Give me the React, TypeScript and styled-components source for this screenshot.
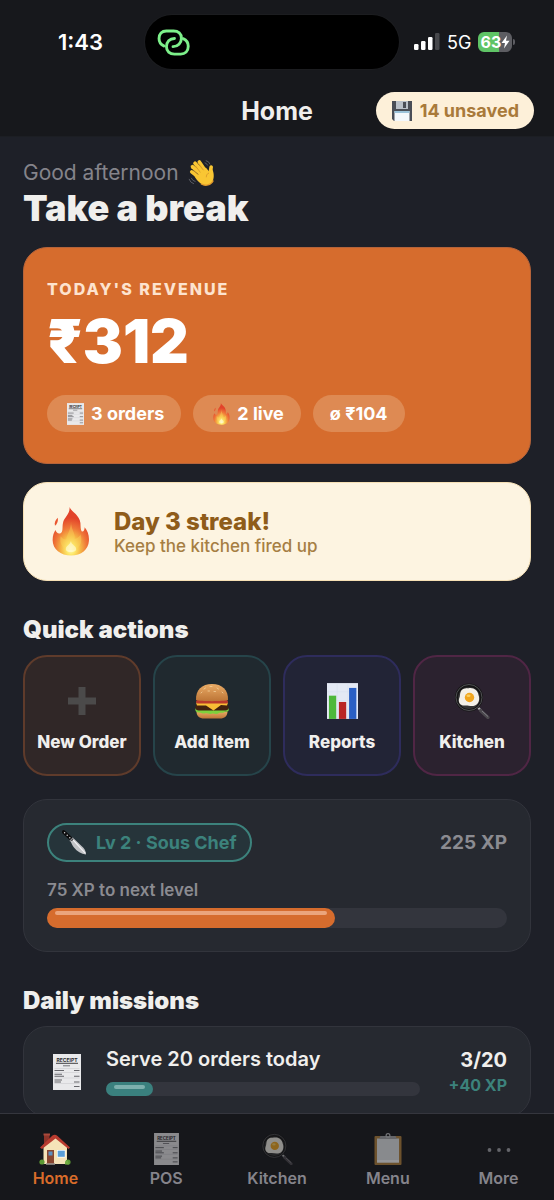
import React from 'react';
import styled, { createGlobalStyle } from 'styled-components';

const GlobalStyle = createGlobalStyle`
  *, *::before, *::after { box-sizing: border-box; }
  body {
    margin: 0;
    background: #1e2028;
    color: #f0efed;
    font-family: Inter, "Liberation Sans", sans-serif;
  }
  h1, h2, p, ul { margin: 0; padding: 0; }
  button { font-family: inherit; margin: 0; cursor: pointer; }
`;

/* ---------- drawings ---------- */

type IconProps = { size: number };

const LinkRings = () => (
  <svg width="33" height="27" viewBox="0 0 34 28" fill="none" stroke="#7df08a" strokeWidth="3" strokeLinecap="round" aria-hidden="true">
    <path d="M7 17.500C3.800 16 2 13 2 9.800C2 5 5 2 9.500 2H17C22 2 25.200 5 25.200 9.500C25.200 14.500 21.500 18.300 16.500 18.300" />
    <path d="M27 10C30.500 11.500 32.300 14.500 32.300 18C32.300 23 29 26 24.500 26H18C13 26 9.700 23 9.700 18.500C9.700 13.500 13 9.800 18 9.800" />
  </svg>
);

const SignalBars = () => (
  <svg width="26" height="18" viewBox="0 0 26 18" aria-hidden="true">
    <rect x="0" y="11" width="4.500" height="6" rx="1.200" fill="#fff" />
    <rect x="7" y="8" width="4.500" height="9" rx="1.200" fill="#fff" />
    <rect x="14" y="4" width="4.500" height="13" rx="1.200" fill="#fff" />
    <rect x="21" y="0" width="4.500" height="17" rx="1.200" fill="#47484c" />
  </svg>
);

const Bolt = () => (
  <svg width="9" height="14" viewBox="0 0 9 14" aria-hidden="true">
    <path d="M6 0.500L0.500 8H4L3 13.500L8.500 5.800H5Z" fill="#fff" />
  </svg>
);

const Floppy = ({ size }: IconProps) => (
  <svg width={size} height={size} viewBox="0 0 22 22" aria-hidden="true">
    <path d="M1 1H21V21H3L1 19Z" fill="#4a4e56" />
    <rect x="5" y="1" width="12" height="8" fill="#b9c0c8" />
    <rect x="12" y="2" width="3" height="6" fill="#4a4e56" />
    <rect x="3.500" y="11" width="15" height="10" fill="#f3f8fc" />
    <rect x="3.500" y="11" width="15" height="2" fill="#9bc3da" />
  </svg>
);

const Wave = ({ size }: IconProps) => (
  <svg width={size} height={size} viewBox="0 0 26 26" aria-hidden="true">
    <g stroke="#f9c633" strokeWidth="3.400" strokeLinecap="round" fill="none">
      <path d="M12 14L4.200 7.200" />
      <path d="M13.500 12L6.500 4" />
      <path d="M16 11L10.500 2.800" />
      <path d="M10 17L3.500 12" />
      <path d="M20.500 14L21.500 7.500" />
    </g>
    <path d="M8 16L16.500 8L20 12L22.500 9.500C24 12 24.500 17 23 20.500C21 25 15 25.500 11.500 22.500C9.500 21 7 18 6 16Z" fill="#f9c633" />
    <path d="M9 14.500L5 10.500M11.500 12.500L7 6.500M14.500 10.500L10 4.500M19.500 13C17.500 13.500 17 15.500 17 17" stroke="#d4912a" strokeWidth="0.700" fill="none" />
    <path d="M12 23C16 25.500 21.500 24.500 23.500 20" stroke="#e39a2c" strokeWidth="1.200" fill="none" />
    <path d="M1 18.500Q2 22 5.500 23M3 17.500Q4 20.300 7 21M16.500 1.500Q19.500 2 20.500 5M15.500 3.500Q17.500 4 18.300 6" stroke="#5a5c63" strokeWidth="0.900" fill="none" />
  </svg>
);

const Flame = ({ size }: IconProps) => (
  <svg width={Math.round(size * 0.78)} height={size} viewBox="0 0 40 52" aria-hidden="true">
    <defs>
      <radialGradient id="flameFill" cx="0.5" cy="0.86" r="0.78">
        <stop offset="0" stopColor="#fffbd0" />
        <stop offset="0.15" stopColor="#fdea6c" />
        <stop offset="0.34" stopColor="#f6b746" />
        <stop offset="0.56" stopColor="#ef7738" />
        <stop offset="0.82" stopColor="#e2432a" />
      </radialGradient>
    </defs>
    <path d="M18.500 0C20 5 29 8 30 17C30.300 21 30 24 31.500 26C33.500 26.500 34.500 24 34.500 21.500C37.500 25 39.500 30 39 36C38.500 45 31 51.500 20 51.500C9 51.500 0.500 45 0.500 35C0.500 30 2 27 3.500 24.500C4.500 27 6 28.500 8.500 28C12 27 10.500 21 11.500 17C12.500 11 19 8 18.500 0Z" fill="url(#flameFill)" />
    <path d="M6 11.500C3.500 14 2 16.500 3 20C5.500 18 6.500 15 6 11.500Z" fill="#e9552f" />
    <path d="M20 15C20 24 25 28 24 34C28 33 29 31 30 29C33 37 29 46 20 46C12 46 7 39 9 31C12 34 13 35 15 34C16 28 20 24 20 15Z" fill="#fbd85c" opacity="0.400" />
    <path d="M20 36C20 40 26 41 25.500 45C25 48.500 15 49 14.500 45C14 41.500 19 40 20 36Z" fill="#fffde0" opacity="0.600" />
  </svg>
);

const Receipt = ({ size }: IconProps) => (
  <svg width={Math.round(size * 0.78)} height={size} viewBox="0 0 28 36" aria-hidden="true">
    <rect width="28" height="36" fill="#e9e9eb" />
    <text x="14" y="7.500" textAnchor="middle" fontFamily="Inter, sans-serif" fontSize="5" fontWeight="700" fill="#2b2b2e">RECEIPT</text>
    <path d="M3 9.300H25" stroke="#2b2b2e" strokeWidth="0.900" />
    <path d="M10 11.800H17" stroke="#66666b" strokeWidth="0.900" />
    <path d="M1.500 14.500H26.500M1.500 18.500H26.500M1.500 24H26.500M1.500 29.500H26.500" stroke="#c4c4c8" strokeWidth="0.500" />
    <path d="M1.500 16.500H11M1.500 20.300H9M1.500 22.300H11M1.500 26H9M1.500 28H8M21 16.500H26.500M21 22.300H26.500M21 28H26.500M21 32.500H26.500" stroke="#66666b" strokeWidth="1.100" />
  </svg>
);

const Plus = ({ size }: IconProps) => (
  <svg width={size} height={size} viewBox="0 0 36 36" aria-hidden="true">
    <path d="M14.500 4H21.500V14.500H32V21.500H21.500V32H14.500V21.500H4V14.500H14.500Z" fill="#4b4a4a" />
  </svg>
);

const Burger = ({ size }: IconProps) => (
  <svg width={size} height={size} viewBox="0 0 36 36" aria-hidden="true">
    <defs>
      <linearGradient id="bun" x1="0" y1="0" x2="0" y2="1">
        <stop offset="0" stopColor="#e9ab66" />
        <stop offset="1" stopColor="#bd7536" />
      </linearGradient>
    </defs>
    <path d="M2.500 28.500H33.500C33.500 33 30.500 35.500 26 35.500H10C5.500 35.500 2.500 33 2.500 28.500Z" fill="url(#bun)" />
    <path d="M1.500 25.500C3 24 33 24 34.500 25.500C35.500 28 33.500 29.500 31 28.500C29 31 27 29 25 30C22.500 32 20 30 18 30.500C15.500 32 13 29.500 10.500 30.500C8 31 6.500 29 4.500 29.500C2 29.500 0.800 27.500 1.500 25.500Z" fill="#7ed03c" />
    <rect x="1.500" y="21" width="33" height="6.500" rx="3.200" fill="#42220f" />
    <path d="M2 19.500H34L33 22.500L27 22L19.500 27.500L12 22.500L3 22.500Z" fill="#f8bd35" />
    <rect x="2" y="17" width="32" height="3.500" rx="1.700" fill="#ba3a2c" />
    <path d="M2 17C1.500 7 8 1 18 1C28 1 34.500 7 34 17C30 18.500 6 18.500 2 17Z" fill="url(#bun)" />
    <path d="M10 6L11.500 5M16 3.500H18M23 5L24.500 6M14 8H15.500M20 8.500H21.500M28 9L29 10M7 10L8 9" stroke="#f3d09a" strokeWidth="0.800" strokeLinecap="round" />
  </svg>
);

const Chart = ({ size }: IconProps) => (
  <svg width={Math.round(size * 0.86)} height={size} viewBox="0 0 32 37" aria-hidden="true">
    <rect width="32" height="37" fill="#e4e9f4" />
    <path d="M0 9H32M0 18H32M0 27H32M10.500 0V37M21.500 0V37" stroke="#d6deee" strokeWidth="0.500" />
    <rect x="2" y="13" width="7.500" height="24" fill="#4eb83a" />
    <rect x="12.300" y="19.500" width="7.500" height="17.500" fill="#b92525" />
    <rect x="22.800" y="5" width="7.500" height="32" fill="#2a5fc4" />
  </svg>
);

const Pan = ({ size }: IconProps) => (
  <svg width={size} height={size} viewBox="0 0 36 36" aria-hidden="true">
    <path d="M23.500 24L27 27.500" stroke="#b8b8bb" strokeWidth="2.200" />
    <path d="M26.500 27.500L34 34.500" stroke="#4b484d" strokeWidth="3.200" strokeLinecap="round" />
    <path d="M28 28L34 33.500" stroke="#85838a" strokeWidth="0.900" />
    <circle cx="15" cy="14.500" r="14" fill="#151515" />
    <circle cx="15" cy="14.500" r="13" fill="none" stroke="#56565a" strokeWidth="0.900" />
    <circle cx="15" cy="15" r="11" fill="#333334" />
    <path d="M7 8C9 4.500 13 5.500 15.500 5C20 4.500 24 7.500 24.500 12C26 16 25 21 21 22.500C17 24 14 22 11 22.500C7 23 4 20 5 16C6.500 13 5.500 10.500 7 8Z" fill="#f3f0e8" />
    <circle cx="15.500" cy="14.500" r="4.700" fill="#f0a51f" />
    <ellipse cx="14.500" cy="12.800" rx="2" ry="1.300" fill="#f9cf63" />
  </svg>
);

const Knife = ({ size }: IconProps) => (
  <svg width={size} height={size} viewBox="0 0 24 24" aria-hidden="true">
    <path d="M8 10.500L11 8L20.500 17C22.500 19 23 21.500 23 23.500C18.500 23 14.500 20.500 11.500 16.800C10 14.800 9 12.500 8 10.500Z" fill="#c2c4c7" />
    <path d="M10.500 9.500L22.500 22.500" stroke="#f5f5f7" strokeWidth="1" />
    <path d="M1.500 1.800L9 8.800" stroke="#0c0c0d" strokeWidth="3.400" strokeLinecap="round" />
    <path d="M7.500 10.800L10.800 7.500" stroke="#8d8f94" strokeWidth="1.300" />
    <g fill="#d8d8da"><circle cx="2.500" cy="2.600" r="0.700" /><circle cx="5" cy="5" r="0.700" /><circle cx="7.500" cy="7.400" r="0.700" /></g>
  </svg>
);

const House = ({ size }: IconProps) => (
  <svg width={size} height={size} viewBox="0 0 32 32" aria-hidden="true">
    <rect x="5" y="1" width="5.500" height="10" fill="#8d3329" />
    <rect x="4.500" y="0.500" width="6.500" height="2" fill="#a94a3c" />
    <path d="M4.500 14L17 3L28 14V31H4.500Z" fill="#f5e3b8" />
    <path d="M1 14.500L13.500 2.500Q16 1 18.500 3L31 14.500L29.500 16L16.500 5.500L3 16Z" fill="#b93c30" />
    <rect x="8" y="17" width="7" height="14" fill="#87452f" />
    <rect x="9.500" y="18.500" width="4" height="4" fill="#5b8fc0" />
    <rect x="18" y="17" width="8.500" height="7.500" fill="#fff" />
    <rect x="18.700" y="17.700" width="7.100" height="6.100" fill="#5b9fd8" />
    <path d="M7 31H16" stroke="#9d9a94" strokeWidth="1.500" />
    <circle cx="3" cy="29" r="2.600" fill="#5c9a35" />
    <circle cx="29" cy="29" r="2.600" fill="#5c9a35" />
    <path d="M26 31.500C25.500 29 27 27 29 28L30 31.500Z" fill="#71ad42" />
  </svg>
);

const Clipboard = ({ size }: IconProps) => (
  <svg width={Math.round(size * 0.88)} height={size} viewBox="0 0 28 32" aria-hidden="true">
    <rect x="0.500" y="3" width="27" height="29" rx="1" fill="#b5833d" />
    <rect x="3" y="5.500" width="22" height="24" fill="#e6e8ea" />
    <rect x="3" y="27" width="22" height="2.500" fill="#fff" />
    <path d="M5 6L6.500 3H21.500L23 6Z" fill="#a6a8ac" />
    <circle cx="14" cy="2.500" r="1.900" fill="none" stroke="#c0c2c5" strokeWidth="1.200" />
  </svg>
);

const Dots = () => (
  <svg width="24" height="32" viewBox="0 0 24 32" aria-hidden="true">
    <g fill="#a5a5ab"><circle cx="2.500" cy="17" r="1.900" /><circle cx="12" cy="17" r="1.900" /><circle cx="21.500" cy="17" r="1.900" /></g>
  </svg>
);

/* ---------- shell ---------- */

const Screen = styled.div`
  height: 100vh;
  display: flex;
  flex-direction: column;
`;

const TopBar = styled.header`
  flex: none;
  background: #17181c;
  border-bottom: 1px solid #1c1e23;
`;

const StatusBar = styled.div`
  display: grid;
  grid-template-columns: 1fr 254px 1fr;
  align-items: center;
  padding: 15px 10px 0 0;
`;

const Clock = styled.time`
  padding-left: 16px;
  text-align: center;
  font-size: 22px;
  font-weight: 600;
  color: #fff;
`;

const Island = styled.div`
  height: 54px;
  padding-left: 12px;
  display: flex;
  align-items: center;
  border-radius: 27px;
  background: #000;
  box-shadow: 0 0 0 1px #1c1d20;
`;

const Signals = styled.div`
  display: flex;
  align-items: center;
  gap: 7px;
  padding-left: 15px;
  color: #fff;
  font-size: 18px;
  font-weight: 400;
`;

const Battery = styled.div`
  position: relative;
  display: flex;
  align-items: center;
  justify-content: center;
  width: 34px;
  height: 20px;
  border-radius: 6px;
  background: linear-gradient(90deg, #5fc466 63%, #5d5d62 63%);
  font-size: 16px;
  font-weight: 700;

  &::after {
    content: '';
    position: absolute;
    left: 35px;
    top: 7px;
    width: 2px;
    height: 6px;
    border-radius: 0 2px 2px 0;
    background: #5d5d62;
  }
`;

const TitleRow = styled.div`
  display: grid;
  grid-template-columns: 1fr auto 1fr;
  align-items: center;
  padding: 23px 20px 7px;
`;

const ScreenTitle = styled.h1`
  grid-column: 2;
  font-size: 25px;
  line-height: 30px;
  font-weight: 700;
`;

const UnsavedButton = styled.button`
  justify-self: end;
  display: flex;
  align-items: center;
  gap: 7px;
  height: 37px;
  padding: 0 15px;
  border: 0;
  border-radius: 19px;
  background: #fdf0d9;
  color: #a97a3a;
  font-size: 18px;
  font-weight: 700;
  white-space: nowrap;
`;

const Content = styled.main`
  flex: 1;
  min-height: 0;
  overflow-y: auto;
  scrollbar-width: none;
  padding: 23px 23px 24px;
`;

/* ---------- greeting ---------- */

const Greeting = styled.p`
  display: flex;
  align-items: center;
  gap: 9px;
  height: 26px;
  font-size: 21px;
  line-height: 26px;
  color: #85848b;
`;

const Headline = styled.h2`
  font-size: 36px;
  line-height: 44px;
  font-weight: 900;
`;

/* ---------- cards ---------- */

const RevenueCard = styled.section`
  margin-top: 17px;
  padding: 30px 23px 31px;
  border: 1px solid #b5633a;
  border-radius: 24px;
  background: #d66c2d;
`;

const RevenueLabel = styled.h2`
  font-size: 16px;
  line-height: 22px;
  font-weight: 800;
  letter-spacing: 2px;
  text-transform: uppercase;
  color: #fde3cf;
`;

const RevenueAmount = styled.p`
  margin-top: 11px;
  font-size: 60px;
  line-height: 60px;
  font-weight: 900;
  color: #fff;
`;

const Chips = styled.ul`
  display: flex;
  gap: 12px;
  margin-top: 24px;
  list-style: none;
`;

const Chip = styled.li`
  display: flex;
  align-items: center;
  gap: 5px;
  height: 37px;
  padding: 0 17px;
  border-radius: 19px;
  background: #de8a53;
  color: #fff;
  font-size: 18px;
  font-weight: 700;
  white-space: nowrap;
`;

const StreakCard = styled.section`
  display: flex;
  align-items: center;
  gap: 20px;
  margin-top: 18px;
  padding: 24px 23px;
  border: 1px solid #f6e0b5;
  border-radius: 24px;
  background: #fdf4e1;
`;

const IconSlot = styled.span<{ $width: number }>`
  flex: none;
  width: ${(p) => p.$width}px;
  display: flex;
  justify-content: center;
`;

const StreakTitle = styled.h2`
  font-size: 24px;
  line-height: 29px;
  font-weight: 800;
  color: #8f5c1a;
`;

const StreakNote = styled.p`
  font-size: 17px;
  line-height: 20px;
  font-weight: 500;
  color: #a67e43;
`;

const SectionTitle = styled.h2`
  margin: 34px 0 10px;
  font-size: 24px;
  line-height: 30px;
  font-weight: 900;
`;

const ActionGrid = styled.div`
  display: grid;
  grid-template-columns: repeat(4, 1fr);
  gap: 12px;
`;

const ActionButton = styled.button<{ $fill: string; $edge: string }>`
  display: flex;
  flex-direction: column;
  align-items: center;
  gap: 12px;
  padding: 26px 0 21px;
  border: 2px solid ${(p) => p.$edge};
  border-radius: 24px;
  background: ${(p) => p.$fill};
  color: #f0efed;
  font-size: 17px;
  line-height: 22px;
  font-weight: 800;
  white-space: nowrap;
`;

const Panel = styled.section`
  padding: 23px;
  border: 1px solid #32343c;
  border-radius: 24px;
  background: #262930;
`;

const LevelPanel = styled(Panel)`
  margin-top: 23px;
`;

const LevelHead = styled.div`
  display: flex;
  align-items: center;
  justify-content: space-between;
`;

const LevelBadge = styled.span`
  display: flex;
  align-items: center;
  gap: 9px;
  height: 39px;
  padding: 0 13px;
  border: 2px solid #3c827c;
  border-radius: 20px;
  background: #26343a;
  color: #3c827c;
  font-size: 18px;
  font-weight: 700;
`;

const XpTotal = styled.span`
  font-size: 19px;
  font-weight: 700;
  color: #8b8b91;
`;

const LevelNote = styled.p`
  margin: 17px 0 7px;
  font-size: 17px;
  line-height: 22px;
  font-weight: 600;
  color: #8b8b91;
`;

const Track = styled.div<{ $height: number }>`
  height: ${(p) => p.$height}px;
  border-radius: 10px;
  background: #33353d;
`;

const Fill = styled.div<{ $color: string; $shine: string }>`
  height: 100%;
  padding: 3px 8px;
  border-radius: 10px;
  background: ${(p) => p.$color};

  &::before {
    content: '';
    display: block;
    height: 4px;
    border-radius: 2px;
    background: ${(p) => p.$shine};
  }
`;

const MissionPanel = styled(Panel)`
  display: flex;
  align-items: center;
  padding: 20px 23px;
`;

const MissionBody = styled.div`
  flex: 1;
  min-width: 0;
  margin: 0 24px 0 19px;
`;

const MissionTitle = styled.h3`
  margin: 0 0 11px;
  font-size: 20px;
  line-height: 24px;
  font-weight: 600;
`;

const MissionScore = styled.div`
  min-width: 63px;
  text-align: right;
`;

const MissionCount = styled.p`
  font-size: 20px;
  line-height: 27px;
  font-weight: 700;
`;

const MissionReward = styled.p`
  font-size: 16px;
  line-height: 22px;
  font-weight: 700;
  color: #3c827c;
`;

/* ---------- tab bar ---------- */

const TabBar = styled.nav`
  flex: none;
  display: grid;
  grid-template-columns: repeat(5, 1fr);
  border-top: 1px solid #35363e;
  background: #16171b;
`;

const Tab = styled.a<{ $active?: boolean }>`
  display: flex;
  flex-direction: column;
  align-items: center;
  gap: 3px;
  padding: 19px 0 11px;
  color: ${(p) => (p.$active ? '#d96c2a' : '#85848b')};
  font-size: 16px;
  line-height: 21px;
  font-weight: 600;
  text-decoration: none;

  svg { opacity: ${(p) => (p.$active ? 1 : 0.55)}; }
`;

/* ---------- data ---------- */

const actions = [
  { label: 'New Order', icon: <Plus size={36} />, fill: '#302727', edge: '#5f3b2b' },
  { label: 'Add Item', icon: <Burger size={36} />, fill: '#20292f', edge: '#26444a' },
  { label: 'Reports', icon: <Chart size={36} />, fill: '#222436', edge: '#2e2c5c' },
  { label: 'Kitchen', icon: <Pan size={36} />, fill: '#2b222f', edge: '#502645' },
];

const tabs = [
  { label: 'Home', icon: <House size={32} />, active: true },
  { label: 'POS', icon: <Receipt size={32} /> },
  { label: 'Kitchen', icon: <Pan size={32} /> },
  { label: 'Menu', icon: <Clipboard size={32} /> },
  { label: 'More', icon: <Dots /> },
];

type MeterProps = { label: string; value: number; max: number; height: number; color: string; shine: string };

const Meter = ({ label, value, max, height, color, shine }: MeterProps) => (
  <Track $height={height} role="progressbar" aria-label={label} aria-valuenow={value} aria-valuemin={0} aria-valuemax={max}>
    <Fill $color={color} $shine={shine} style={{ width: `${(value / max) * 100}%` }} />
  </Track>
);

export default function App() {
  return (
    <Screen>
      <GlobalStyle />
      <TopBar>
        <StatusBar>
          <Clock>1:43</Clock>
          <Island><LinkRings /></Island>
          <Signals>
            <SignalBars />
            <span>5G</span>
            <Battery>63<Bolt /></Battery>
          </Signals>
        </StatusBar>
        <TitleRow>
          <ScreenTitle>Home</ScreenTitle>
          <UnsavedButton type="button"><Floppy size={22} />14 unsaved</UnsavedButton>
        </TitleRow>
      </TopBar>

      <Content>
        <Greeting>Good afternoon <Wave size={28} /></Greeting>
        <Headline>Take a break</Headline>

        <RevenueCard>
          <RevenueLabel>Today's revenue</RevenueLabel>
          <RevenueAmount>₹312</RevenueAmount>
          <Chips>
            <Chip><IconSlot $width={22}><Receipt size={22} /></IconSlot>3 orders</Chip>
            <Chip><IconSlot $width={22}><Flame size={22} /></IconSlot>2 live</Chip>
            <Chip>ø ₹104</Chip>
          </Chips>
        </RevenueCard>

        <StreakCard>
          <IconSlot $width={47}><Flame size={49} /></IconSlot>
          <div>
            <StreakTitle>Day 3 streak!</StreakTitle>
            <StreakNote>Keep the kitchen fired up</StreakNote>
          </div>
        </StreakCard>

        <SectionTitle>Quick actions</SectionTitle>
        <ActionGrid>
          {actions.map((a) => (
            <ActionButton key={a.label} type="button" $fill={a.fill} $edge={a.edge}>
              {a.icon}
              {a.label}
            </ActionButton>
          ))}
        </ActionGrid>

        <LevelPanel>
          <LevelHead>
            <LevelBadge><Knife size={25} />Lv 2 · Sous Chef</LevelBadge>
            <XpTotal>225 XP</XpTotal>
          </LevelHead>
          <LevelNote>75 XP to next level</LevelNote>
          <Meter label="Level progress" value={125} max={200} height={20} color="#d66c2d" shine="#eba57c" />
        </LevelPanel>

        <SectionTitle>Daily missions</SectionTitle>
        <MissionPanel>
          <IconSlot $width={40}><Receipt size={36} /></IconSlot>
          <MissionBody>
            <MissionTitle>Serve 20 orders today</MissionTitle>
            <Meter label="Serve 20 orders today" value={3} max={20} height={14} color="#3a807e" shine="#7db0ae" />
          </MissionBody>
          <MissionScore>
            <MissionCount>3/20</MissionCount>
            <MissionReward>+40 XP</MissionReward>
          </MissionScore>
        </MissionPanel>
      </Content>

      <TabBar aria-label="Main">
        {tabs.map((t) => (
          <Tab key={t.label} href={`#${t.label.toLowerCase()}`} $active={t.active} aria-current={t.active ? 'page' : undefined}>
            {t.icon}
            {t.label}
          </Tab>
        ))}
      </TabBar>
    </Screen>
  );
}
